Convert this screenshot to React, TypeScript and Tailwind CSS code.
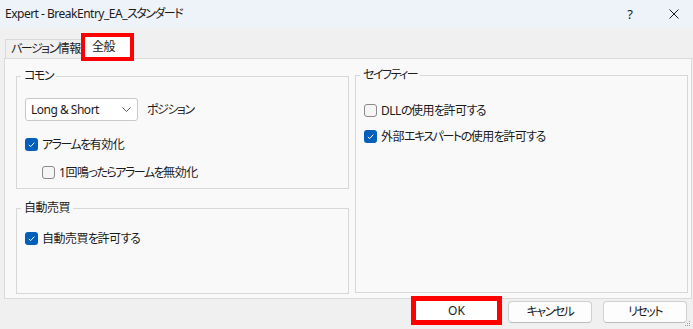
import type { ReactNode } from "react";

const FONT =
  "font-['Noto_Sans','Noto_Sans_CJK_JP',sans-serif] [font-feature-settings:'palt'] text-[#1b1b1b]";

const KANA = /[\u3000-\u30ff\uff00-\uffef]/;

// Latin, kana and kanji runs get different tracking so widths match the Yu Gothic UI original
function T({ children }: { children: string }) {
  const parts = children
    .split(/([\u3000-\u30ff\uff00-\uffef]+|[\u4e00-\u9fff]+)/)
    .filter(Boolean);
  return (
    <>
      {parts.map((p, i) => (
        <span key={i} className={KANA.test(p) ? "tracking-[-1.5px]" : "tracking-[-0.5px]"}>
          {p}
        </span>
      ))}
    </>
  );
}

function Check({ checked }: { checked?: boolean }) {
  if (checked) {
    return (
      <span className="flex h-[13px] w-[13px] shrink-0 items-center justify-center rounded-[3px] bg-[#005fb8]">
        <svg width="9" height="9" viewBox="0 0 9 9">
          <path d="M1.8 4.9 L3.7 6.6 L7.3 2.6" stroke="white" strokeWidth="1" fill="none" />
        </svg>
      </span>
    );
  }
  return <span className="h-[13px] w-[13px] shrink-0 rounded-[3px] border border-[#8a8a8a] bg-[#f5f5f5]" />;
}

function CheckRow({ checked, label, className = "" }: { checked?: boolean; label: string; className?: string }) {
  return (
    <div className={`flex h-[13px] items-center gap-[4px] ${className}`}>
      <Check checked={checked} />
      <span className="whitespace-nowrap text-[12px] leading-[16px]">
        <T>{label}</T>
      </span>
    </div>
  );
}

function Group({ title, className, children }: { title: string; className: string; children: ReactNode }) {
  return (
    <fieldset className={`border border-[#d7d7d7] px-[8px] ${className}`}>
      <legend className="ml-[-4px] px-[3px] text-[12px] leading-[16px]">
        <T>{title}</T>
      </legend>
      {children}
    </fieldset>
  );
}

function Button({ label }: { label: string }) {
  return (
    <button className="mt-[2px] flex h-[22px] w-[84px] items-center justify-center rounded-[4px] border border-[#d0d0d0] border-b-[#bcbcbc] bg-[#fdfdfd] text-[12px]">
      <T>{label}</T>
    </button>
  );
}

export default function App() {
  return (
    <div className={`relative flex h-[329px] w-[693px] flex-col overflow-hidden bg-[#f0f0f0] ${FONT}`}>
      {/* Title bar */}
      <div className="flex h-[28px] shrink-0 items-center bg-[#eef2f9] pl-[5px]">
        <span className="whitespace-nowrap text-[12px] leading-[16px]">
          <T>Expert - BreakEntry_EA_スタンダード</T>
        </span>
        <span className="ml-auto text-[13px] leading-[16px]">?</span>
        <span className="ml-[36px] mr-[14px] flex">
          <svg width="10" height="10" viewBox="0 0 10 10">
            <path d="M0.5 0.5 L9.5 9.5 M9.5 0.5 L0.5 9.5" stroke="#1b1b1b" strokeWidth="1" />
          </svg>
        </span>
      </div>

      {/* Tabs */}
      <div className="flex h-[30px] shrink-0 items-end pl-[5px]">
        <div className="flex h-[19px] w-[76px] items-center overflow-hidden border-t border-l border-[#d9d9d9] pl-[5px]">
          <span className="whitespace-nowrap text-[12px] leading-[16px] tracking-[-0.3px]">
            <T>バージョン情報</T>
          </span>
        </div>
        <div className="relative z-10 -mb-[3px] flex h-[28px] w-[53px] items-center border-4 border-[#ff0000] bg-white pl-[7px]">
          <span className="text-[12px] leading-[16px]">
            <T>全般</T>
          </span>
        </div>
      </div>

      {/* Panel */}
      <div className="ml-[4px] flex h-[241px] w-[688px] shrink-0 gap-[6px] border border-[#dadada] bg-[#f9f9f9] pl-[11px] pr-[3px]">
        <div className="flex w-[333px] flex-col pt-[9px]">
          <Group title="コモン" className="h-[121px]">
            <div className="mt-[14px] flex items-center gap-[9px]">
              <div className="flex h-[23px] w-[113px] items-center rounded-[3px] border border-[#c9c9c9] bg-white pl-[5px] pr-[6px]">
                <span className="text-[12px] leading-[16px]">
                  <T>Long &amp; Short</T>
                </span>
                <svg className="ml-auto" width="9" height="5" viewBox="0 0 9 5">
                  <path d="M0.5 0.5 L4.5 4.5 L8.5 0.5" stroke="#5a5a5a" strokeWidth="1" fill="none" />
                </svg>
              </div>
              <span className="text-[12px] leading-[16px]">
                <T>ポジション</T>
              </span>
            </div>
            <CheckRow checked label="アラームを有効化" className="mt-[17px]" />
            <CheckRow label="1回鳴ったらアラームを無効化" className="mt-[15px] pl-[17px]" />
          </Group>
          <Group title="自動売買" className="mt-[11px] h-[94px]">
            <CheckRow checked label="自動売買を許可する" className="mt-[16px]" />
          </Group>
        </div>
        <div className="flex w-[333px] flex-col pt-[8px]">
          <Group title="セイフティー" className="h-[226px]">
            <CheckRow label="DLLの使用を許可する" className="mt-[21px]" />
            <CheckRow checked label="外部エキスパートの使用を許可する" className="mt-[13px]" />
          </Group>
        </div>
      </div>

      {/* Buttons */}
      <div className="flex flex-1 items-start justify-end gap-[6px] pr-[6px]">
        <div className="relative z-10 -mt-[3px] flex h-[29px] w-[91px] items-center justify-center border-[5px] border-[#ff0000] bg-white">
          <span className="text-[12px] leading-[16px]">OK</span>
        </div>
        <Button label="キャンセル" />
        <div className="ml-[5px]">
          <Button label="リセット" />
        </div>
      </div>

      <svg className="absolute bottom-[2px] right-[2px]" width="6" height="6" viewBox="0 0 6 6">
        <rect x="4" y="0" width="1" height="1" fill="#9a9a9a" />
        <rect x="2" y="2" width="1" height="1" fill="#9a9a9a" />
        <rect x="4" y="2" width="1" height="1" fill="#9a9a9a" />
        <rect x="0" y="4" width="1" height="1" fill="#9a9a9a" />
        <rect x="2" y="4" width="1" height="1" fill="#9a9a9a" />
        <rect x="4" y="4" width="1" height="1" fill="#9a9a9a" />
      </svg>
    </div>
  );
}
